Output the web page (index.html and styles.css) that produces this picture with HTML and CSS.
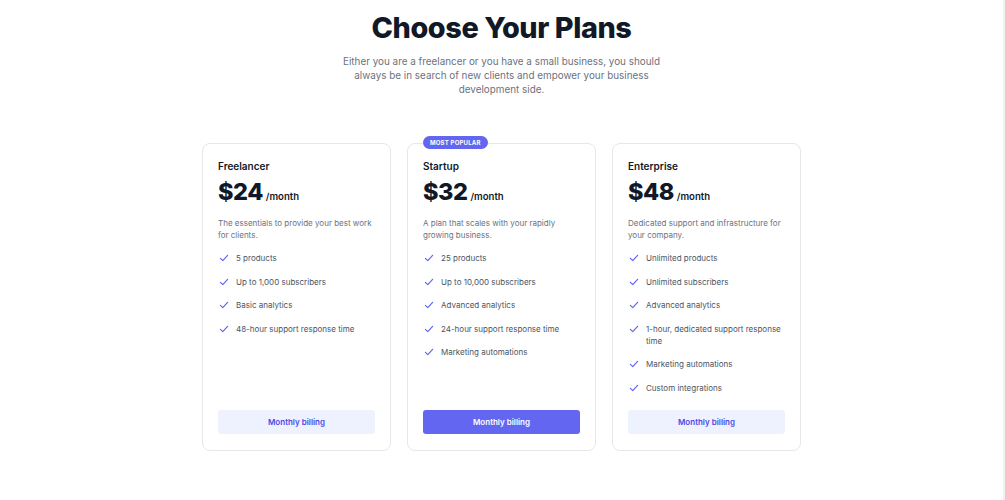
FILE: index.html
```html
<!DOCTYPE html>
<html lang="en">
<head>
<meta charset="utf-8">
<title>Choose Your Plans</title>
<link rel="stylesheet" href="styles.css">
</head>
<body>
<main class="page">
  <header class="intro">
    <h1 class="title">Choose Your Plans</h1>
    <p class="lead">Either you are a freelancer or you have a small business, you should always be in search of new clients and empower your business development side.</p>
  </header>
  <section class="plans">
    <article class="card">
      <h2 class="plan-name">Freelancer</h2>
      <p class="price"><span class="amount">$24</span><span class="per">/month</span></p>
      <p class="desc">The essentials to provide your best work for clients.</p>
      <ul class="features">
        <li><svg class="check" viewBox="0 0 20 20"><path d="M4 10.5l4 4 8-9"/></svg><span>5 products</span></li>
        <li><svg class="check" viewBox="0 0 20 20"><path d="M4 10.5l4 4 8-9"/></svg><span>Up to 1,000 subscribers</span></li>
        <li><svg class="check" viewBox="0 0 20 20"><path d="M4 10.5l4 4 8-9"/></svg><span>Basic analytics</span></li>
        <li><svg class="check" viewBox="0 0 20 20"><path d="M4 10.5l4 4 8-9"/></svg><span>48-hour support response time</span></li>
      </ul>
      <button class="btn">Monthly billing</button>
    </article>
    <article class="card">
      <span class="badge">Most popular</span>
      <h2 class="plan-name">Startup</h2>
      <p class="price"><span class="amount">$32</span><span class="per">/month</span></p>
      <p class="desc">A plan that scales with your rapidly growing business.</p>
      <ul class="features">
        <li><svg class="check" viewBox="0 0 20 20"><path d="M4 10.5l4 4 8-9"/></svg><span>25 products</span></li>
        <li><svg class="check" viewBox="0 0 20 20"><path d="M4 10.5l4 4 8-9"/></svg><span>Up to 10,000 subscribers</span></li>
        <li><svg class="check" viewBox="0 0 20 20"><path d="M4 10.5l4 4 8-9"/></svg><span>Advanced analytics</span></li>
        <li><svg class="check" viewBox="0 0 20 20"><path d="M4 10.5l4 4 8-9"/></svg><span>24-hour support response time</span></li>
        <li><svg class="check" viewBox="0 0 20 20"><path d="M4 10.5l4 4 8-9"/></svg><span>Marketing automations</span></li>
      </ul>
      <button class="btn btn-primary">Monthly billing</button>
    </article>
    <article class="card">
      <h2 class="plan-name">Enterprise</h2>
      <p class="price"><span class="amount">$48</span><span class="per">/month</span></p>
      <p class="desc">Dedicated support and infrastructure for your company.</p>
      <ul class="features">
        <li><svg class="check" viewBox="0 0 20 20"><path d="M4 10.5l4 4 8-9"/></svg><span>Unlimited products</span></li>
        <li><svg class="check" viewBox="0 0 20 20"><path d="M4 10.5l4 4 8-9"/></svg><span>Unlimited subscribers</span></li>
        <li><svg class="check" viewBox="0 0 20 20"><path d="M4 10.5l4 4 8-9"/></svg><span>Advanced analytics</span></li>
        <li><svg class="check" viewBox="0 0 20 20"><path d="M4 10.5l4 4 8-9"/></svg><span>1-hour, dedicated support response time</span></li>
        <li><svg class="check" viewBox="0 0 20 20"><path d="M4 10.5l4 4 8-9"/></svg><span>Marketing automations</span></li>
        <li><svg class="check" viewBox="0 0 20 20"><path d="M4 10.5l4 4 8-9"/></svg><span>Custom integrations</span></li>
      </ul>
      <button class="btn">Monthly billing</button>
    </article>
  </section>
</main>
</body>
</html>
```
FILE: styles.css
```css
* { box-sizing: border-box; }
html, body { margin: 0; padding: 0; background: #ffffff; }
body {
  font-family: Inter, "Noto Sans", sans-serif;
  color: #111827;
  -webkit-font-smoothing: antialiased;
  border-right: 2px solid #f1f1f1;
  min-height: 500px;
}
.page {
  display: flex;
  flex-direction: column;
  align-items: center;
  padding-top: 9px;
}
.intro {
  display: flex;
  flex-direction: column;
  align-items: center;
  text-align: center;
}
.title {
  margin: 0;
  font-size: 28.8px;
  line-height: 38px;
  font-weight: 800;
  letter-spacing: -0.4px;
  color: #111827;
}
.lead {
  margin: 7px 0 0;
  width: 324px;
  font-size: 9.9px;
  line-height: 14px;
  color: #6b7280;
}
.plans {
  display: grid;
  grid-template-columns: repeat(3, 189px);
  gap: 16px;
  margin-top: 47px;
}
.card {
  position: relative;
  display: flex;
  flex-direction: column;
  border: 1px solid #e5e7eb;
  border-radius: 8px;
  padding: 15px 15px 16px;
  height: 308px;
  background: #fff;
}
.badge {
  position: absolute;
  top: -8px;
  left: 15px;
  background: #6366f1;
  color: #fff;
  font-size: 6px;
  font-weight: 700;
  text-transform: uppercase;
  letter-spacing: 0.2px;
  line-height: 13px;
  padding: 0 7px;
  border-radius: 999px;
}
.plan-name {
  margin: 0;
  font-size: 10px;
  line-height: 14px;
  font-weight: 600;
  color: #111827;
}
.price {
  margin: 4px 0 0;
  display: flex;
  align-items: baseline;
  gap: 3px;
}
.amount {
  font-size: 23.5px;
  line-height: 30px;
  font-weight: 800;
  letter-spacing: -0.5px;
  color: #111827;
}
.per {
  font-size: 9.6px;
  font-weight: 600;
  color: #111827;
}
.desc {
  margin: 10px 0 0;
  font-size: 8px;
  line-height: 12px;
  color: #6b7280;
}
.features {
  list-style: none;
  margin: 11px 0 0;
  padding: 0;
  display: flex;
  flex-direction: column;
  gap: 11.6px;
  flex: 1;
}
.features li {
  display: flex;
  gap: 6px;
  font-size: 8px;
  line-height: 12px;
  color: #4b5563;
}
.check {
  flex: none;
  width: 12px;
  height: 12px;
  fill: none;
  stroke: #6366f1;
  stroke-width: 2;
  stroke-linecap: round;
  stroke-linejoin: round;
}
.btn {
  border: 0;
  border-radius: 3px;
  height: 24px;
  width: 100%;
  font-family: inherit;
  font-size: 8px;
  font-weight: 600;
  background: #eef2ff;
  color: #4f46e5;
}
.btn-primary {
  background: #6366f1;
  color: #ffffff;
}
```
